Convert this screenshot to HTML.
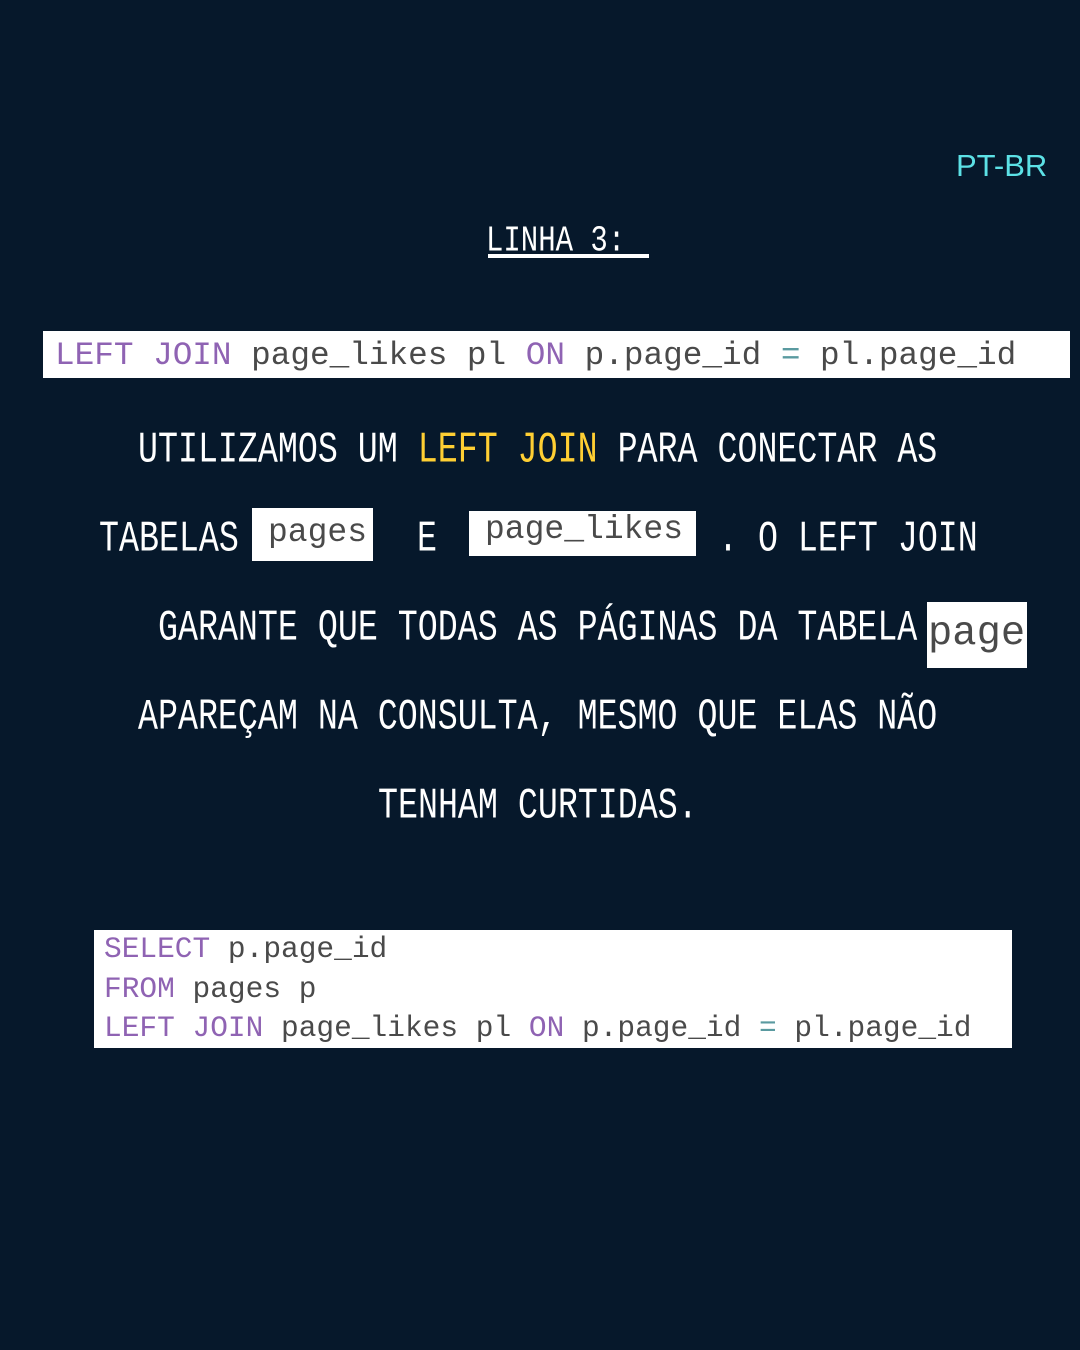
<!DOCTYPE html>
<html><head><meta charset="utf-8"><style>
html,body{margin:0;padding:0}
body{width:1080px;height:1350px;background:#06182b;position:relative;overflow:hidden}
.t{position:absolute;font-family:"Liberation Mono",monospace;font-size:33.3px;line-height:33px;color:#fff;white-space:pre;transform:scaleY(1.3);transform-origin:0 0}
.y{color:#ffcf33}
.box{position:absolute;background:#fff}
.c{position:absolute;font-family:"Liberation Mono",monospace;white-space:pre;color:#4a4a4a}
.k{color:#8f63b3}
.e{color:#5a9aa0}
</style></head><body>
<div style="position:absolute;left:956px;top:148px;font-family:'Liberation Sans',sans-serif;font-size:31px;color:#5ce1e6">PT-BR</div>
<div class="t" style="left:486px;top:223px;font-size:29px;line-height:29px;transform:scaleY(1.25)">LINHA 3:</div>
<div style="position:absolute;left:488px;top:254px;width:161px;height:4px;background:#fff"></div>

<div class="box" style="left:43px;top:331px;width:1027px;height:47px"></div>
<div class="c" style="left:55px;top:336px;font-size:32.7px;line-height:40px"><span class="k">LEFT JOIN</span> page_likes pl <span class="k">ON</span> p.page_id <span class="e">=</span> pl.page_id</div>

<div class="t" style="left:138px;top:429px">UTILIZAMOS UM <span class="y">LEFT JOIN</span> PARA CONECTAR AS</div>

<div class="t" style="left:99px;top:518px">TABELAS</div>
<div class="box" style="left:252px;top:508px;width:121px;height:53px"></div>
<div class="c" style="left:268px;top:513px;font-size:33px;line-height:40px">pages</div>
<div class="t" style="left:417px;top:518px">E</div>
<div class="box" style="left:469px;top:511px;width:227px;height:45px"></div>
<div class="c" style="left:485px;top:510px;font-size:33px;line-height:40px">page_likes</div>
<div class="t" style="left:718px;top:518px">. O LEFT JOIN</div>

<div class="t" style="left:158px;top:607px">GARANTE QUE TODAS AS PÁGINAS DA TABELA</div>
<div class="box" style="left:927px;top:602px;width:100px;height:66px"></div>
<div class="c" style="left:928px;top:609px;font-size:40.5px;line-height:50px">page</div>

<div class="t" style="left:138px;top:696px">APAREÇAM NA CONSULTA, MESMO QUE ELAS NÃO</div>
<div class="t" style="left:378px;top:785px">TENHAM CURTIDAS.</div>

<div class="box" style="left:94px;top:930px;width:918px;height:118px"></div>
<div class="c" style="left:104px;top:930px;font-size:29.5px;line-height:39.5px"><span class="k">SELECT</span> p.page_id
<span class="k">FROM</span> pages p
<span class="k">LEFT JOIN</span> page_likes pl <span class="k">ON</span> p.page_id <span class="e">=</span> pl.page_id</div>
</body></html>
